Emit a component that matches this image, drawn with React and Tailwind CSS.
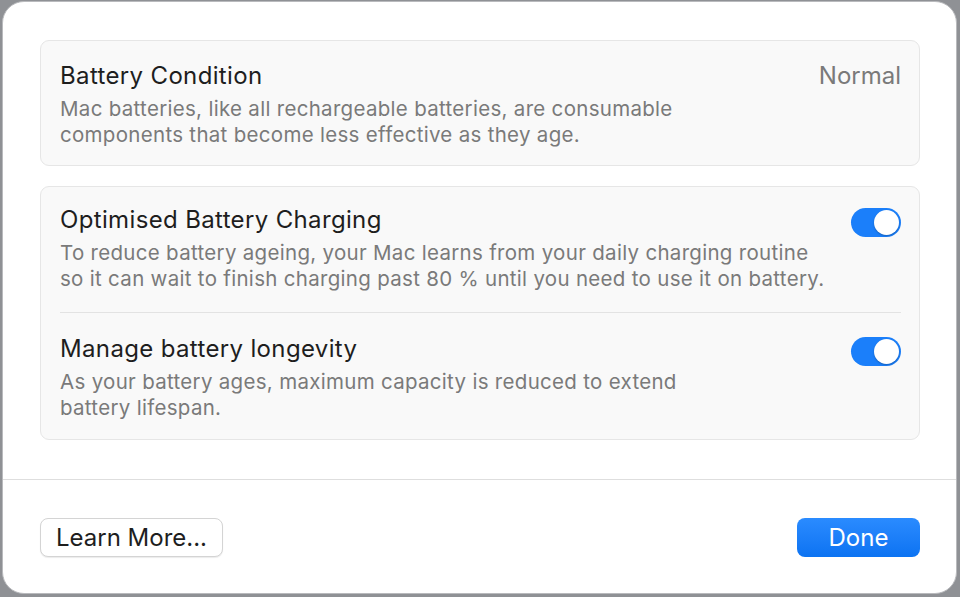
import React, { useState } from 'react'

const Toggle = ({ on, onChange }) => (
  <button
    onClick={onChange}
    className={`flex h-[29px] w-[50px] shrink-0 items-center rounded-full p-[2px] ${
      on ? 'justify-end bg-[#1b7ffa]' : 'justify-start bg-[#e2e2e2]'
    }`}
  >
    <span className="h-[25px] w-[25px] rounded-full bg-white shadow-[0_1px_2px_rgba(0,0,0,0.25)]" />
  </button>
)

const Row = ({ title, lines, children }) => (
  <>
    <div>
      <div className="text-[24px] leading-[28px] tracking-[0.35px] text-[#1e1e1e]">{title}</div>
      <p className="mt-[6px] text-[20.5px] leading-[26px] tracking-[0.3px] text-[#7a7a7a]">
        {lines[0]}
        <br />
        {lines[1]}
      </p>
    </div>
    {children}
  </>
)

const App = () => {
  const [optimised, setOptimised] = useState(true)
  const [longevity, setLongevity] = useState(true)

  return (
    <div className="h-[597px] w-[960px] bg-[#8f9195] pl-[2px] pt-[1px] font-['Inter','Liberation_Sans',sans-serif]">
      <div className="flex h-[593px] w-[955px] flex-col rounded-[22px] border border-[#b9babd] bg-white">
        {/* Cards */}
        <div className="flex flex-col gap-[20px] pl-[37px] pr-[36px] pt-[38px]">
          <div className="flex items-start justify-between rounded-[9px] border border-[#e6e6e6] bg-[#f9f9f9] pl-[19px] pr-[18px] pb-[17px] pt-[21px]">
            <Row
              title="Battery Condition"
              lines={[
                'Mac batteries, like all rechargeable batteries, are consumable',
                'components that become less effective as they age.',
              ]}
            >
              <span className="text-[24px] leading-[28px] text-[#7a7a7a]">Normal</span>
            </Row>
          </div>

          <div className="rounded-[9px] border border-[#e6e6e6] bg-[#f9f9f9] pl-[19px] pr-[18px] pb-[18px] pt-[19px]">
            <div className="flex items-start justify-between border-b border-[#e3e3e3] pb-[20px]">
              <Row
                title="Optimised Battery Charging"
                lines={[
                  'To reduce battery ageing, your Mac learns from your daily charging routine',
                  'so it can wait to finish charging past 80 % until you need to use it on battery.',
                ]}
              >
                <div className="pt-[2px]">
                  <Toggle on={optimised} onChange={() => setOptimised(!optimised)} />
                </div>
              </Row>
            </div>
            <div className="flex items-start justify-between pt-[22px]">
              <Row
                title="Manage battery longevity"
                lines={[
                  'As your battery ages, maximum capacity is reduced to extend',
                  'battery lifespan.',
                ]}
              >
                <div className="pt-[2px]">
                  <Toggle on={longevity} onChange={() => setLongevity(!longevity)} />
                </div>
              </Row>
            </div>
          </div>
        </div>

        {/* Footer */}
        <div className="mt-[39px] border-t border-[#dedede]" />
        <div className="flex items-center justify-between pl-[37px] pr-[36px] pt-[38px]">
          <button className="h-[39px] w-[183px] rounded-[8px] border border-[#d4d4d4] bg-white text-[24px] text-[#1e1e1e] shadow-[0_1px_1px_rgba(0,0,0,0.08)]">
            Learn More...
          </button>
          <button className="h-[39px] w-[123px] rounded-[8px] bg-gradient-to-b from-[#2a8bff] to-[#0b73f2] text-[24px] text-white">
            Done
          </button>
        </div>
      </div>
    </div>
  )
}

export default App
